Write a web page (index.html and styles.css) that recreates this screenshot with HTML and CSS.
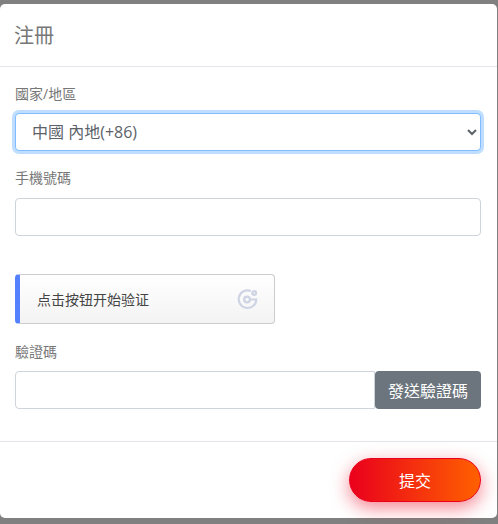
FILE: index.html
```html
<!DOCTYPE html>
<html lang="zh-Hant">
<head>
    <meta charset="UTF-8">
    <meta name="viewport" content="width=device-width, initial-scale=1.0">
    <title>注冊</title>
    <link rel="stylesheet" href="styles.css">
</head>
<body>
    <div class="modal">
        <div class="modal-header">
            <h5 class="modal-title">注冊</h5>
        </div>

        <div class="modal-body">
            <div class="field">
                <label class="field-label" for="country">國家/地區</label>
                <select class="field-control field-select" id="country">
                    <option>中國 內地(+86)</option>
                </select>
            </div>

            <div class="field">
                <label class="field-label" for="phone">手機號碼</label>
                <input class="field-control" id="phone" type="text">
            </div>

            <div class="captcha">
                <span class="captcha-text">点击按钮开始验证</span>
                <svg class="captcha-icon" width="21" height="21" viewBox="0 0 22 22" fill="none" stroke="#cfd4e4" stroke-width="2.3">
                    <path d="M14.5 2.2A9.2 9.2 0 1 0 20.2 11H14"/>
                    <circle cx="10.5" cy="11" r="3"/>
                    <circle cx="18" cy="4.2" r="2"/>
                </svg>
            </div>

            <div class="field">
                <label class="field-label" for="code">驗證碼</label>
                <div class="input-group">
                    <input class="field-control" id="code" type="text">
                    <button class="send-button" type="button">發送驗證碼</button>
                </div>
            </div>
        </div>

        <div class="modal-footer">
            <button class="submit-button" type="button">提交</button>
        </div>
    </div>
</body>
</html>
```

FILE: styles.css
```css
* {
    box-sizing: border-box;
}

body {
    margin: 0;
    height: 524px;
    padding: 4px 1px 6px 0;
    overflow: hidden;
    background-color: #808080;
    font-family: "Open Sans", "Noto Sans CJK TC", sans-serif;
}

.modal {
    height: 514px;
    background-color: #fff;
    border-radius: 5px;
    display: flex;
    flex-direction: column;
}

.modal-header {
    height: 63px;
    padding: 0 14px 2px;
    display: flex;
    align-items: center;
    border-bottom: 1px solid #e3e3ea;
}

.modal-title {
    margin: 0;
    font-size: 20px;
    font-weight: 400;
    color: #777;
}

.modal-body {
    flex: 1;
    padding: 17px 16px 0 15px;
}

.field {
    margin-bottom: 18px;
}

.field-label {
    display: block;
    height: 21px;
    margin-bottom: 8px;
    font-size: 14px;
    line-height: 19px;
    color: #777;
}

.field + .field .field-label {
    line-height: 18px;
}

.field-control {
    display: block;
    width: 100%;
    height: 38px;
    padding: 0 16px;
    background-color: #fff;
    border: 1px solid #ced4da;
    border-radius: 4px;
    font-family: inherit;
    font-size: 16px;
    color: #5c6268;
}

.field-select {
    padding-left: 12px;
    border-color: #80bdff;
    box-shadow: 0 0 0 3px #bfdeff;
    outline: none;
}

.captcha {
    width: 260px;
    height: 50px;
    margin: 38px 0 18px;
    padding: 0 16px 0 17px;
    display: flex;
    align-items: center;
    justify-content: space-between;
    background: linear-gradient(180deg, #fff, #f3f3f3);
    border: 1px solid #ccc;
    border-left: 5px solid #5482ff;
    border-radius: 4px;
    font-size: 14px;
    color: #444;
}

.input-group {
    display: flex;
}

.input-group .field-control {
    width: 360px;
    border-radius: 4px 0 0 4px;
}

.send-button {
    width: 106px;
    height: 38px;
    padding: 0;
    background-color: #6c757d;
    border: none;
    border-radius: 4px;
    font-family: inherit;
    font-size: 16px;
    color: #fff;
}

.modal-footer {
    height: 77px;
    padding: 16px 16px 0 0;
    display: flex;
    justify-content: flex-end;
    border-top: 1px solid #e3e3ea;
}

.submit-button {
    width: 132px;
    height: 44px;
    padding-bottom: 2px;
    background: linear-gradient(90deg, #ea001c, #ff6000);
    border: 1px solid #ea001c;
    border-radius: 22px;
    box-shadow: 0 6px 18px rgba(238, 10, 36, 0.5);
    font-family: inherit;
    font-size: 16px;
    color: #fff;
}
```
